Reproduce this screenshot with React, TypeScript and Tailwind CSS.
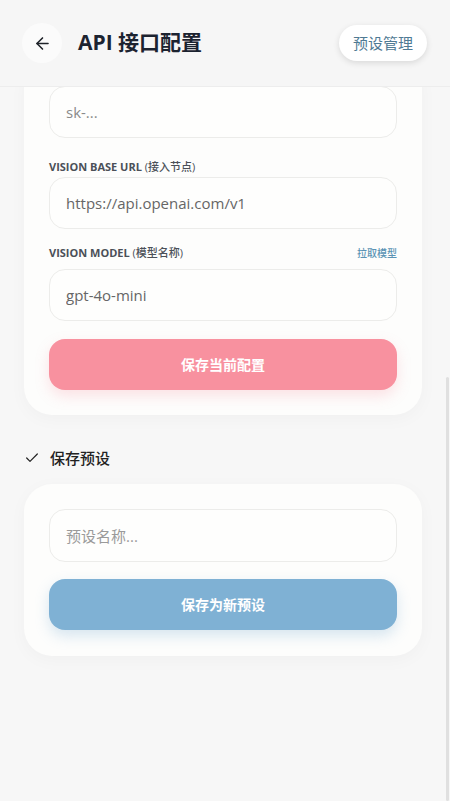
import { ArrowLeft, Check } from 'lucide-react'

const font = { fontFamily: '"Open Sans", "Noto Sans CJK SC", sans-serif' }

function Label({ text, sub }: { text: string; sub: string }) {
  return (
    <span className="block text-[11px] font-bold uppercase leading-[14px] text-[#4b5058]">
      {text} <span className="font-medium normal-case">{sub}</span>
    </span>
  )
}

function Field({ value, placeholder }: { value?: string; placeholder?: string }) {
  return (
    <input
      readOnly
      value={value ?? ''}
      placeholder={placeholder}
      className="block h-[52px] w-full rounded-2xl border border-[#ececea] bg-[#fefefd] px-[16px] text-[15px] text-[#666] outline-none placeholder:text-[#8a8a8a]"
    />
  )
}

export default function App() {
  return (
    <div
      className="relative flex h-[801px] w-[450px] flex-col overflow-hidden bg-[#f7f7f7]"
      style={font}
    >
      <header className="flex h-[87px] shrink-0 items-center justify-between border-b border-[#ededed] bg-[#f6f6f6] pl-[22px] pr-[23px]">
        <div className="flex items-center gap-4">
          <button className="flex h-10 w-10 items-center justify-center rounded-full bg-[#fbfbfb] text-[#1f2329]">
            <ArrowLeft size={19} strokeWidth={2} />
          </button>
          <h1 className="text-[21px] font-bold text-[#1c2330]">API 接口配置</h1>
        </div>
        <button className="h-[36px] rounded-full bg-white px-[14px] text-[15px] text-[#4f7a94] shadow-[0_2px_6px_rgba(0,0,0,0.12)]">
          预设管理
        </button>
      </header>

      <main className="flex-1 overflow-hidden pl-6 pr-[28px]">
        <section className="-mt-[26px] rounded-[28px] bg-[#fdfdfc] px-[25px] pb-[25px] pt-[25px] shadow-[0_4px_18px_rgba(0,0,0,0.03)]">
          <Field placeholder="sk-..." />

          <div className="mb-[3px] mt-[22px]">
            <Label text="Vision Base URL" sub="(接入节点)" />
          </div>
          <Field value="https://api.openai.com/v1" />

          <div className="mb-[5px] mt-[13px] flex h-[22px] items-center justify-between">
            <Label text="Vision Model" sub="(模型名称)" />
            <button className="text-[10px] font-medium leading-[14px] text-[#5a93b4]">拉取模型</button>
          </div>
          <Field value="gpt-4o-mini" />

          <button className="mt-[18px] block h-[51px] w-full rounded-2xl bg-[#f8919f] text-[14px] font-bold text-white shadow-[0_6px_14px_rgba(248,145,159,0.25)]">
            保存当前配置
          </button>
        </section>

        <div className="mt-[32px] flex h-[22px] items-center gap-[10px] text-[#222]">
          <Check size={16} strokeWidth={1.8} />
          <span className="text-[15px] font-medium">保存预设</span>
        </div>

        <section className="mt-[15px] rounded-[28px] bg-[#fdfdfc] px-[25px] pb-[26px] pt-[25px] shadow-[0_4px_18px_rgba(0,0,0,0.03)]">
          <input
            readOnly
            placeholder="预设名称..."
            className="block h-[53px] w-full rounded-2xl border border-[#ececea] bg-[#fefefd] px-[16px] text-[15px] outline-none placeholder:text-[#9a9a9a]"
          />
          <button className="mt-[17px] block h-[51px] w-full rounded-2xl bg-[#7fb1d4] text-[14px] font-bold text-white shadow-[0_6px_14px_rgba(127,177,212,0.3)]">
            保存为新预设
          </button>
        </section>
      </main>

      <div className="absolute bottom-0 right-[1px] top-[377px] w-[3px] rounded-full bg-[#e0e0e0]" />
    </div>
  )
}
